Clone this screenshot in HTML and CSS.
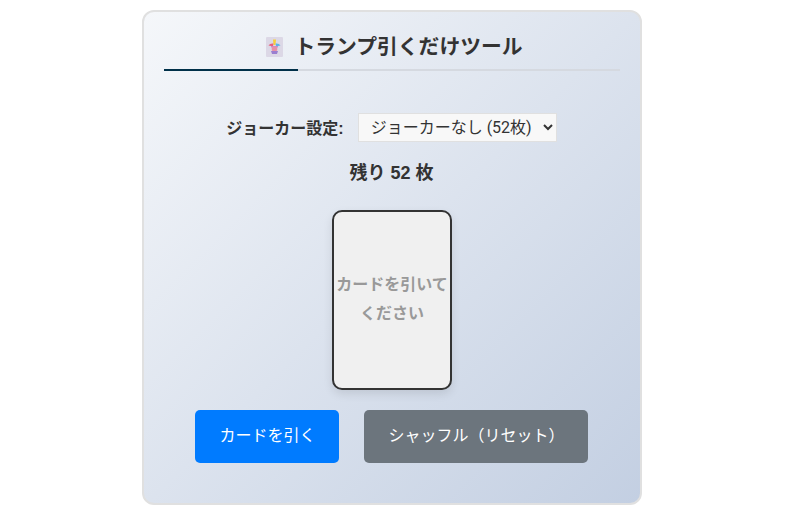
FILE: index.html
```html
<!DOCTYPE html>
<html lang="ja">
<head>
<meta charset="utf-8">
<title>トランプ引くだけツール</title>
<link rel="stylesheet" href="styles.css">
</head>
<body>
<main class="panel">
  <header class="header">
    <h1 class="title">
      <svg class="joker" viewBox="0 0 17 20" aria-hidden="true">
        <rect width="17" height="20" rx="1" fill="#dcd8e6"/>
        <path d="M7 2.500h3l-.5 5.500h-2z" fill="#f7cf3c"/>
        <path d="M2.500 8.500Q4 6 7.500 6.500L7 9H5z" fill="#e8607c"/>
        <path d="M14.500 8.500Q13 6 9.500 6.500L10 9h2z" fill="#5cb4e8"/>
        <path d="M5 9h7v1.500H5z" fill="#c48ad0"/>
        <circle cx="8.500" cy="12" r="2.800" fill="#e890a8"/>
        <path d="M5 14h7l-1 3H6z" fill="#9a7fd0"/>
      </svg>
      <span>トランプ引くだけツール</span>
    </h1>
    <div class="rule"><div class="rule-fill"></div></div>
  </header>
  <div class="settings">
    <label class="settings-label" for="joker">ジョーカー設定:</label>
    <select class="settings-select" id="joker">
      <option>ジョーカーなし (52枚)</option>
      <option>ジョーカーあり (53枚)</option>
    </select>
  </div>
  <p class="remaining">残り 52 枚</p>
  <div class="card">カードを引いてください</div>
  <div class="actions">
    <button class="btn btn-primary" type="button">カードを引く</button>
    <button class="btn btn-secondary" type="button">シャッフル（リセット）</button>
  </div>
</main>
</body>
</html>
```

FILE: styles.css
```css
* { box-sizing: border-box; }

html, body { height: 100%; }

body {
  margin: 0;
  padding: 10px 0 0 142px;
  background: #fff;
  color: #333;
  font-family: "Liberation Sans", "Noto Sans CJK JP", sans-serif;
  overflow: hidden;
}

.panel {
  width: 500px;
  height: 495px;
  padding: 20px;
  border: 2px solid #e0e0e0;
  border-radius: 12px;
  background: linear-gradient(135deg, #f5f7fa 0%, #c3cfe2 100%);
  display: flex;
  flex-direction: column;
  align-items: center;
}

.header { width: 100%; }

.title {
  margin: 0;
  height: 37px;
  padding: 0 0 7px 5px;
  display: flex;
  align-items: center;
  justify-content: center;
  gap: 11px;
  font-size: 20.8px;
  font-weight: 700;
  line-height: 30px;
}

.joker { width: 17px; height: 20px; }

.rule {
  height: 2px;
  background: #d5d9e0;
}

.rule-fill {
  width: 134px;
  height: 2px;
  background: #003049;
}

.settings {
  margin: 42px 1px 0 0;
  display: flex;
  align-items: center;
  gap: 14px;
}

.settings-label {
  padding-bottom: 2px;
  font-size: 16px;
  font-weight: 700;
}

.settings-select {
  width: 199px;
  height: 29px;
  padding: 0 0 0 8px;
  border: 1px solid #e0e0e0;
  border-radius: 0;
  background: #f8f8f8;
  color: #333;
  font-family: Roboto, "Noto Sans CJK JP", sans-serif;
  font-size: 16px;
}

.remaining {
  margin: 18px 1px 0 0;
  font-size: 18px;
  font-weight: 700;
  line-height: 27px;
}

.card {
  width: 120px;
  height: 180px;
  margin-top: 23px;
  padding: 0 0 2px;
  display: flex;
  align-items: center;
  justify-content: center;
  border: 2px solid #333;
  border-radius: 10px;
  background: #f0f0f0;
  box-shadow: 0 4px 10px rgba(0, 0, 0, 0.1);
  color: #999;
  font-size: 16px;
  font-weight: 700;
  line-height: 29px;
  text-align: center;
}

.actions {
  margin: 20px 2px 0 0;
  display: flex;
  gap: 25px;
}

.btn {
  height: 53px;
  padding: 0 23px 5px 25px;
  border: 0;
  border-radius: 5px;
  color: #fff;
  font-family: inherit;
  font-size: 16px;
}

.btn-primary { width: 144px; background: #007bff; }
.btn-secondary { width: 224px; background: #6c757d; }
```
